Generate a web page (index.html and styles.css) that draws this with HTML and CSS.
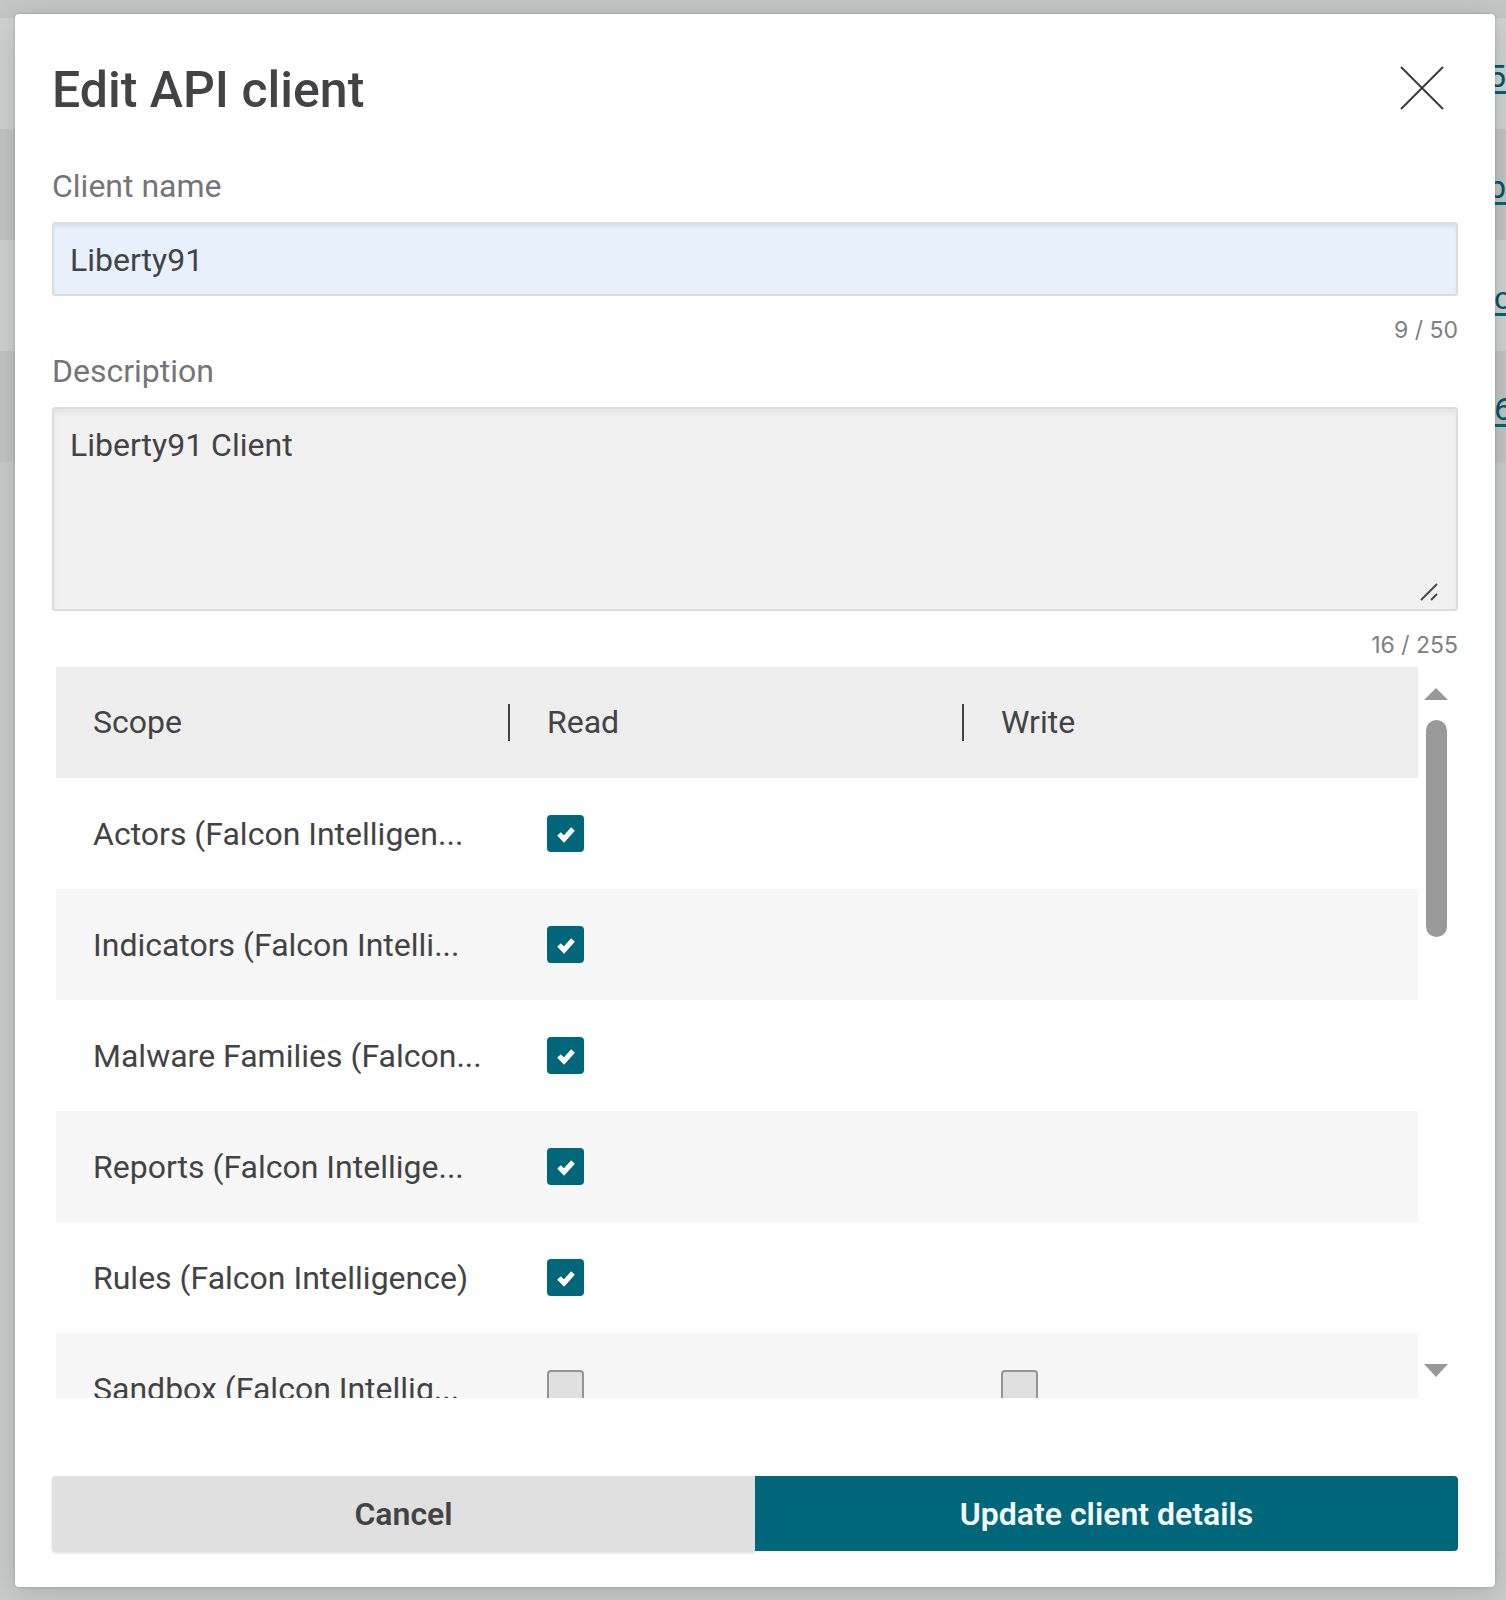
FILE: index.html
```html
<!DOCTYPE html>
<html lang="en">
<head>
<meta charset="utf-8">
<meta name="viewport" content="width=device-width, initial-scale=1">
<title>Edit API client</title>
<link rel="stylesheet" href="styles.css">
</head>
<body>
<div class="stage">
  <div class="backdrop">
    <ul class="backdrop-list">
      <li><a href="#">5</a></li>
      <li><a href="#">b</a></li>
      <li><a class="narrow" href="#">c</a></li>
      <li><a class="narrow" href="#">6</a></li>
    </ul>
  </div>
  <form class="modal" role="dialog" aria-labelledby="modal-title">
    <header class="modal-header">
      <h1 id="modal-title">Edit API client</h1>
      <button class="close" type="button" aria-label="Close">
        <svg width="44" height="44" viewBox="0 0 44 44"><path d="M1 1 43 43M43 1 1 43" fill="none" stroke="#3c3c3e" stroke-width="2"/></svg>
      </button>
    </header>

    <div class="field">
      <label for="client-name">Client name</label>
      <input id="client-name" class="control control-name" type="text" value="Liberty91">
      <p class="count">9 / 50</p>
    </div>

    <div class="field">
      <label for="description">Description</label>
      <div class="textarea-wrap">
        <textarea id="description" class="control control-description">Liberty91 Client</textarea>
        <svg class="grip" width="18" height="18" viewBox="0 0 18 18"><path d="M1 17 17 1M11 17 17 11" fill="none" stroke="#4a4a4c" stroke-width="2"/></svg>
      </div>
      <p class="count">16 / 255</p>
    </div>

    <div class="scopes">
      <div class="scopes-view">
        <table>
          <thead>
            <tr><th scope="col"><span>Scope</span></th><th scope="col"><span>Read</span></th><th scope="col"><span>Write</span></th></tr>
          </thead>
          <tbody>
            <tr><td>Actors (Falcon Intelligen...</td><td><input type="checkbox" aria-label="Actors read" checked></td><td></td></tr>
            <tr><td>Indicators (Falcon Intelli...</td><td><input type="checkbox" aria-label="Indicators read" checked></td><td></td></tr>
            <tr><td>Malware Families (Falcon...</td><td><input type="checkbox" aria-label="Malware Families read" checked></td><td></td></tr>
            <tr><td>Reports (Falcon Intellige...</td><td><input type="checkbox" aria-label="Reports read" checked></td><td></td></tr>
            <tr><td>Rules (Falcon Intelligence)</td><td><input type="checkbox" aria-label="Rules read" checked></td><td></td></tr>
            <tr><td>Sandbox (Falcon Intellig...</td><td><input type="checkbox" aria-label="Sandbox read"></td><td><input type="checkbox" aria-label="Sandbox write"></td></tr>
          </tbody>
        </table>
      </div>
      <div class="scrollbar" aria-hidden="true">
        <svg width="24" height="12" viewBox="0 0 24 12"><path d="M0 12 12 0 24 12Z" fill="#999"/></svg>
        <div class="track"><div class="thumb"></div></div>
        <svg width="24" height="13" viewBox="0 0 24 13"><path d="M0 0H24L12 13Z" fill="#999"/></svg>
      </div>
    </div>

    <footer class="actions">
      <button class="btn btn-cancel" type="button">Cancel</button>
      <button class="btn btn-primary" type="submit">Update client details</button>
    </footer>
  </form>
</div>
</body>
</html>
```
FILE: styles.css
```css
* { box-sizing: border-box; }

body {
  margin: 0;
  font-family: Roboto, "Liberation Sans", sans-serif;
  font-size: 32px;
  line-height: 40px;
  color: #434345;
}

/* The page behind and the dialog share one grid cell. */
.stage {
  display: grid;
  grid-template-columns: minmax(0, 1fr);
  min-height: 100vh;
  background: #cbcdcc;
}

.backdrop,
.modal { grid-area: 1 / 1; }

.backdrop {
  padding-top: 18px;
  background: linear-gradient(#c5c7c6, #c5c7c6) top / 100% 18px no-repeat;
  overflow: hidden;
}

.backdrop-list {
  margin: 0;
  padding: 0;
  list-style: none;
}

.backdrop-list li {
  display: flex;
  justify-content: flex-end;
  align-items: center;
  height: 111px;
  padding-top: 4px;
  background: #d1d3d2;
}

.backdrop-list li:nth-child(even) { background: #c4c5c5; }

.backdrop-list a {
  color: #00586a;
  text-decoration-color: #00667a;
  text-decoration-thickness: 3px;
  text-underline-offset: 4px;
}

.backdrop-list .narrow { width: 12px; }

.modal {
  z-index: 1;
  display: flex;
  flex-direction: column;
  margin: 14px 11px 13px 15px;
  padding: 37px;
  padding-bottom: 34px;
  background: #fff;
  border-radius: 4px;
  box-shadow: 0 0 3px rgba(0, 0, 0, .2), 0 6px 32px rgba(0, 0, 0, .16);
}

.modal-header {
  display: flex;
  justify-content: space-between;
  align-items: center;
  height: 74px;
  margin-bottom: 41px;
}

h1 {
  margin: 0;
  padding-top: 4px;
  font-size: 50px;
  line-height: 56px;
  font-weight: 500;
}

button {
  padding: 0;
  border: 0;
  font: inherit;
  cursor: pointer;
}

.close {
  display: flex;
  margin-right: 14px;
  background: none;
}

.field {
  display: flex;
  flex-direction: column;
}

.field label {
  margin-bottom: 16px;
  color: #757577;
}

.control {
  display: block;
  width: 100%;
  padding: 16px;
  border: 2px solid #dcdddd;
  border-radius: 3px;
  font: inherit;
  color: inherit;
  outline: 0;
}

.control-name {
  height: 74px;
  padding-top: 18px;
  background: #e8f0fc;
  box-shadow: inset 0 3px 3px rgba(0, 0, 0, .06);
}

.textarea-wrap { position: relative; }

.control-description {
  height: 204px;
  background: #f1f1f1;
  resize: none;
  box-shadow: inset 0 4px 5px rgba(0, 0, 0, .05);
}

.grip {
  position: absolute;
  right: 20px;
  bottom: 10px;
}

.count {
  margin: 19px 0 6px;
  font-family: Inter, "Liberation Sans", sans-serif;
  font-size: 23px;
  line-height: 30px;
  text-align: right;
  color: #7f8081;
}

.scopes {
  display: flex;
  gap: 6px;
  height: 731px;
  margin-top: 1px;
  padding: 0 10px 0 4px;
}

.scopes-view {
  flex: 1;
  overflow: hidden;
}

table {
  width: 100%;
  table-layout: fixed;
  border-collapse: collapse;
}

tr { height: 111px; }

th,
td {
  padding: 0 0 0 37px;
  text-align: left;
  font-weight: 400;
  white-space: nowrap;
}

thead { background: #eee; }

tbody tr:nth-child(even) { background: #f7f7f7; }

th span {
  display: block;
  line-height: 37px;
}

th:not(:last-child) span { border-right: 2px solid #434345; }

td input {
  display: block;
  appearance: none;
  width: 37px;
  height: 37px;
  margin: 0;
  border: 2px solid #939494;
  border-radius: 4px;
  background: #e0e0e0;
}

td input:checked {
  border-color: #00667a;
  background: #00667a url("data:image/svg+xml,%3Csvg xmlns='http://www.w3.org/2000/svg' viewBox='0 0 18 18'%3E%3Cpath d='M2 9l5 5L16 4' fill='none' stroke='%23fff' stroke-width='5'/%3E%3C/svg%3E") center / 18px no-repeat;
}

.scrollbar {
  display: flex;
  flex-direction: column;
  align-items: center;
  width: 24px;
  padding: 21px 0;
}

.track {
  flex: 1;
  padding-top: 20px;
}

.thumb {
  width: 21px;
  height: 217px;
  border-radius: 11px;
  background: #999;
}

.actions {
  display: grid;
  grid-template-columns: 1fr 1fr;
  align-items: start;
  margin-top: 78px;
}

.btn {
  height: 76px;
  font-weight: 600;
}

.btn-cancel {
  border-radius: 4px 0 0 4px;
  background: #e0e0e0;
  color: inherit;
  box-shadow: 0 1px 3px rgba(0, 0, 0, .15);
}

.btn-primary {
  height: 75px;
  border-radius: 0 4px 4px 0;
  background: #00667a;
  color: #f4f8ff;
}
```
